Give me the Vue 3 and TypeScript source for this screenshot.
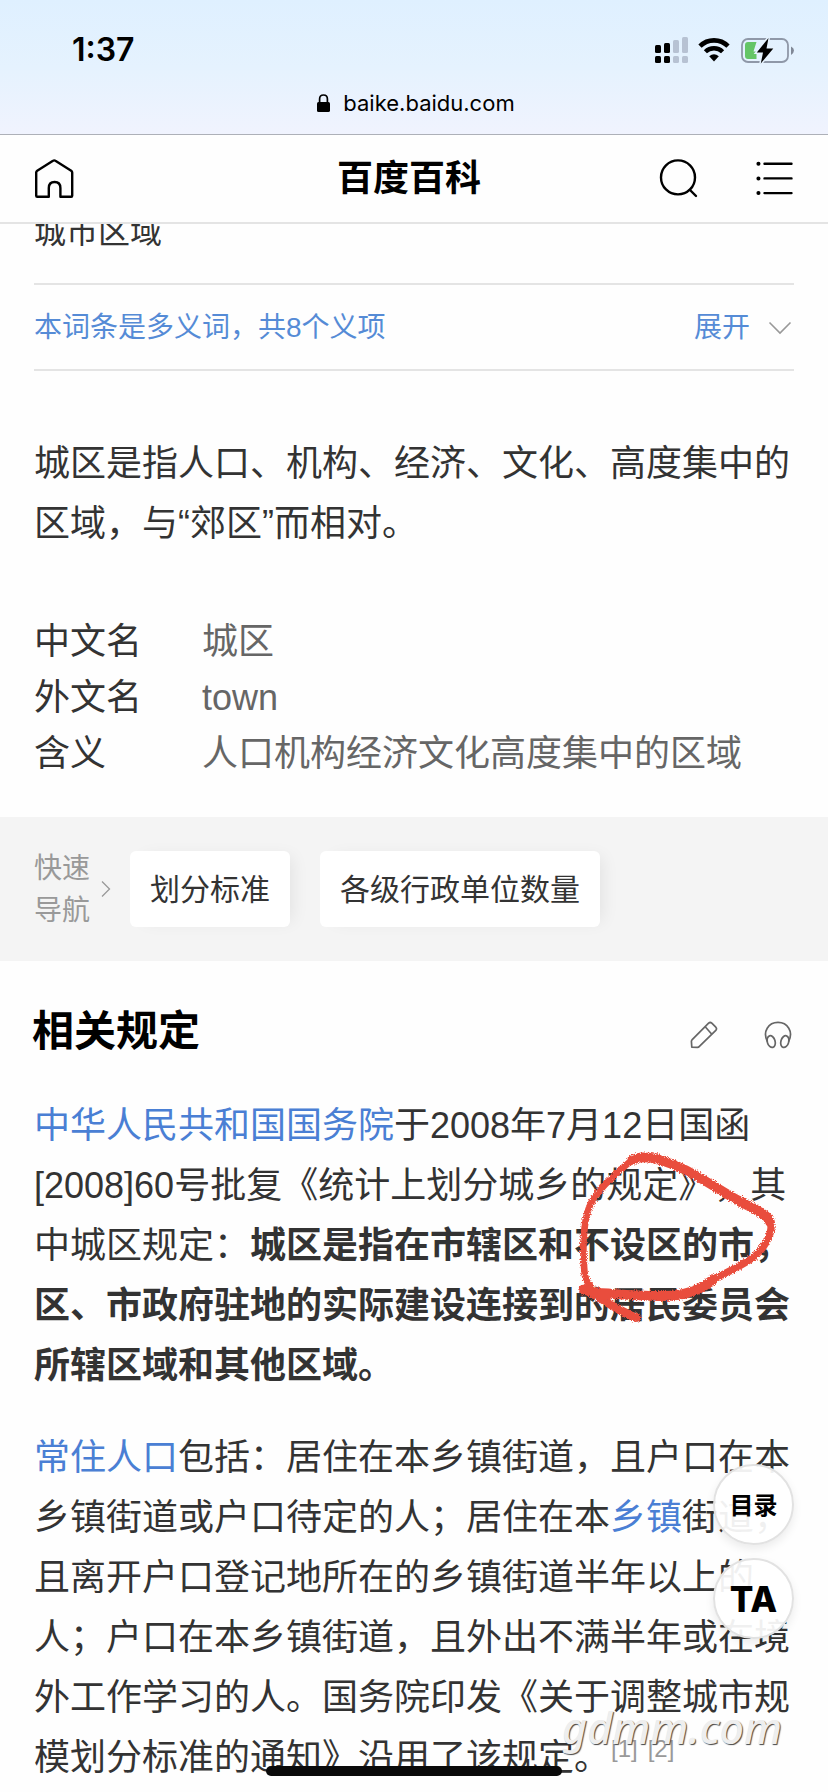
<script setup lang="ts">
interface Fact {
  name: string
  value: string
}

const facts: Fact[] = [
  { name: '中文名', value: '城区' },
  { name: '外文名', value: 'town' },
  { name: '含义', value: '人口机构经济文化高度集中的区域' },
]

const sections: string[] = ['划分标准', '各级行政单位数量']

// Cellular bars: left edge, top, height and whether the bar is lit
const bars: { x: number; y: number; h: number; on: boolean }[] = [
  { x: 0, y: 8, h: 8, on: true },
  { x: 9, y: 6, h: 10, on: true },
  { x: 18, y: 3, h: 13, on: false },
  { x: 27, y: 0, h: 16, on: false },
]
</script>

<template>
  <div class="page">
    <header class="browser">
      <div class="status">
        <span class="time">1:37</span>
        <div class="signals">
          <svg class="cell" width="33" height="27" viewBox="0 0 33 27" aria-hidden="true">
            <g v-for="b in bars" :key="b.x" :class="b.on ? 'on' : 'off'">
              <rect :x="b.x" :y="b.y" width="6" :height="b.h" rx="1.5" />
              <rect :x="b.x" y="19" width="6" height="7" rx="1.5" />
            </g>
          </svg>
          <svg width="32" height="24" viewBox="0 0 32 24" aria-hidden="true">
            <path d="M2 8.2A19.8 19.8 0 0 1 30 8.2" fill="none" stroke="#000" stroke-width="4.6" />
            <path d="M7.4 13.8A12.2 12.2 0 0 1 24.6 13.8" fill="none" stroke="#000" stroke-width="4.4" />
            <path d="M11.2 18.2Q16 14.4 20.8 18.2L16 23.6Z" />
          </svg>
          <svg width="54" height="27" viewBox="0 0 54 27" aria-hidden="true">
            <rect x="2" y="2" width="46" height="23" rx="6" fill="none" stroke="#8f98a8" stroke-width="1.8" />
            <path d="M51 9.5Q54 11 54 13.5T51 18Z" fill="#808896" />
            <path d="M8 5H16.5L13.5 14.5H16.5V22H8Q5 22 5 19V8Q5 5 8 5Z" fill="#64c566" />
            <path d="M28.5 1L16.8 15.4H23L20.8 26.4L33.3 11.6H26.5Z" stroke="#e5f2fe" stroke-width="3" />
            <path d="M28.5 1L16.8 15.4H23L20.8 26.4L33.3 11.6H26.5Z" />
          </svg>
        </div>
      </div>
      <div class="address">
        <svg width="13" height="18" viewBox="0 0 13 18" aria-hidden="true">
          <rect x="0" y="8" width="13" height="10" rx="1.6" />
          <path d="M2.6 9V5Q2.6 1 6.5 1T10.4 5V9" fill="none" stroke="#000" stroke-width="1.7" />
        </svg>
        <span>baike.baidu.com</span>
      </div>
    </header>

    <nav class="topbar">
      <button class="icon-btn" type="button" aria-label="首页">
        <svg width="40" height="40" viewBox="0 0 40 40" fill="none" stroke="#000" stroke-width="2.4" stroke-linejoin="round">
          <path d="M3.2 37.8Q2.2 37.8 2.2 36.8V13.6Q2.2 12.4 3.2 11.7L19 1.8Q20.2 1 21.4 1.8L37.2 11.7Q38.2 12.4 38.2 13.6V36.8Q38.2 37.8 37.2 37.8H26.4V29Q26.4 23 20.6 23T14.8 29V37.8Z" />
        </svg>
      </button>
      <h1 class="brand">百度百科</h1>
      <div class="tools">
        <button class="icon-btn" type="button" aria-label="搜索">
          <svg width="40" height="40" viewBox="0 0 40 40" fill="none" stroke="#000" stroke-width="2.4" stroke-linecap="round">
            <circle cx="20" cy="18.4" r="17" />
            <path d="M32 31L38 37" />
          </svg>
        </button>
        <button class="icon-btn" type="button" aria-label="菜单">
          <svg width="38" height="40" viewBox="0 0 38 40" stroke="#000" stroke-width="2.4" stroke-linecap="round">
            <path d="M8.5 4.8H35.5M8.5 19.4H35.5M8.5 34.1H35.5" />
            <path d="M2.4 4.8H2.5M2.4 19.4H2.5M2.4 34.1H2.5" stroke-width="4" />
          </svg>
        </button>
      </div>
    </nav>

    <main class="article">
      <p class="subtitle">城市区域</p>

      <div class="senses">
        <a href="#senses">本词条是多义词，共8个义项</a>
        <button class="expand" type="button">
          <span>展开</span>
          <svg width="24" height="14" viewBox="0 0 24 14" fill="none" stroke="#999" stroke-width="1.6" aria-hidden="true">
            <path d="M1.5 1.5L12 12L22.5 1.5" />
          </svg>
        </button>
      </div>

      <p class="body summary">城区是指人口、机构、经济、文化、高度集中的区域，与“郊区”而相对。</p>

      <dl class="facts">
        <template v-for="fact in facts" :key="fact.name">
          <dt>{{ fact.name }}</dt>
          <dd>{{ fact.value }}</dd>
        </template>
      </dl>

      <section class="quick">
        <span class="quick-label">快速<br />导航</span>
        <svg class="quick-arrow" width="10" height="18" viewBox="0 0 10 18" fill="none" stroke="#999" stroke-width="1.3" aria-hidden="true">
          <path d="M1 1.5L8.5 9L1 16.5" />
        </svg>
        <button v-for="s in sections" :key="s" class="chip" type="button">{{ s }}</button>
      </section>

      <div class="section-head">
        <h2>相关规定</h2>
        <div class="section-tools">
          <button class="icon-btn" type="button" aria-label="编辑">
            <svg width="28" height="28" viewBox="0 0 28 28" fill="none" stroke="#666" stroke-width="1.7" stroke-linejoin="round">
              <path d="M1.8 26.2L1.4 20.4Q1.4 19.4 2.2 18.6L18.6 2.2Q20.2 .8 21.8 2.2L25.8 6.2Q27.2 7.8 25.8 9.4L9.4 25.4Q8.6 26.4 7.4 26.4Z" />
              <path d="M15.2 5.8L21.6 13" />
            </svg>
          </button>
          <button class="icon-btn" type="button" aria-label="播放">
            <svg width="28" height="28" viewBox="0 0 28 28" fill="none" stroke="#666" stroke-width="1.7">
              <path d="M3.4 20.5C-1.8 10.5 4.6 1.4 14 1.4S29.8 10.5 24.6 20.5" />
              <ellipse cx="7.2" cy="20.6" rx="3.9" ry="6" transform="rotate(-16 7.2 20.6)" />
              <ellipse cx="20.8" cy="20.6" rx="3.9" ry="6" transform="rotate(16 20.8 20.6)" />
            </svg>
          </button>
        </div>
      </div>

      <div class="regulation">
        <p class="body">
          <a href="#council">中华人民共和国国务院</a>于2008年7月12日国函[2008]60号批复《统计上划分城乡的规定》，其中城区规定：<b>城区是指在市辖区和不设区的市，区、市政府驻地的实际建设连接到的居民委员会所辖区域和其他区域。</b>
        </p>
        <svg class="marker" width="230" height="200" viewBox="0 0 690 600" fill="none" stroke="#e94e3d" stroke-linecap="round" stroke-linejoin="round" aria-hidden="true">
          <filter id="crayon" x="-5%" y="-5%" width="110%" height="110%">
            <feTurbulence type="fractalNoise" baseFrequency="0.35" numOctaves="2" seed="4" />
            <feDisplacementMap in="SourceGraphic" scale="14" xChannelSelector="R" yChannelSelector="G" />
          </filter>
          <g filter="url(#crayon)">
            <path stroke-width="20" d="M92 435C68 415 74 380 70 335C70 280 75 230 88 198C98 165 160 100 215 58" />
            <path stroke-width="29" d="M215 58C250 36 320 60 370 84C430 112 500 163 560 192C595 211 625 223 630 243" />
            <path stroke-width="22" d="M630 243C642 270 615 320 585 345C550 372 500 395 460 415" />
            <path stroke-width="30" d="M460 415C420 450 370 465 310 465C240 466 180 460 120 456L70 446" />
            <path stroke-width="26" d="M74 444C120 465 160 505 230 530" />
          </g>
        </svg>
      </div>

      <p class="body residents">
        <a href="#residents">常住人口</a>包括：居住在本乡镇街道，且户口在本乡镇街道或户口待定的人；居住在本<a href="#township">乡镇</a>街道，且离开户口登记地所在的乡镇街道半年以上的人；户口在本乡镇街道，且外出不满半年或在境外工作学习的人。国务院印发《关于调整城市规模划分标准的通知》沿用了该规定。<sup><a href="#ref-1">[1]</a><a href="#ref-2">[2]</a></sup>
      </p>
    </main>

    <aside class="floating">
      <button class="round" type="button">目录</button>
      <button class="round logo" type="button">TA</button>
    </aside>
    <span class="watermark">gdmm.com</span>
    <div class="home-indicator"></div>
  </div>
</template>

<style>
body {
  background: #fff;
}
</style>

<style scoped>
.page {
  position: relative;
  min-height: 100vh;
  overflow: hidden;
  background: #fefefe;
  color: #333;
  font-family: "Liberation Sans", "Noto Sans CJK SC", sans-serif;
  text-spacing-trim: space-all;
}

h1, h2, p, dl, dd {
  margin: 0;
}

a {
  color: #4a7fd4;
  text-decoration: none;
}

button {
  margin: 0;
  padding: 0;
  border: 0;
  background: none;
  color: inherit;
  font-family: inherit;
}

svg {
  display: block;
}

.browser {
  display: flex;
  flex-direction: column;
  height: 134px;
  border-bottom: 1px solid #adb0b8;
  background: linear-gradient(#dff0ff, #e5f2fe 50%, #f0f3fe);
  color: #000;
  font-family: Inter, "Liberation Sans", sans-serif;
}

.status {
  display: flex;
  align-items: center;
  justify-content: space-between;
  height: 86px;
  padding: 14px 34px 0 72px;
  box-sizing: border-box;
}

.time {
  font-size: 32px;
  font-weight: 600;
  line-height: 40px;
}

.signals {
  display: flex;
  align-items: center;
  gap: 10px;
}

.on {
  fill: #000;
}

.off {
  fill: #b7c2d3;
}

.address {
  display: flex;
  align-items: center;
  justify-content: center;
  gap: 13px;
  padding: 1px 0 0 4px;
  font-size: 22px;
  line-height: 32px;
}

.topbar {
  display: grid;
  grid-template-columns: 1fr auto 1fr;
  align-items: center;
  height: 87px;
  padding: 0 34px;
  border-bottom: 2px solid #e4e4e4;
}

.brand {
  padding-right: 10px;
  color: #000;
  font-size: 36px;
  font-weight: 700;
  line-height: 48px;
}

.tools {
  display: flex;
  justify-content: flex-end;
  gap: 58px;
}

.icon-btn {
  justify-self: start;
}

.article {
  overflow: hidden;
}

.subtitle {
  margin: -14px 34px 0;
  padding-bottom: 29px;
  border-bottom: 2px solid #e4e4e4;
  font-size: 32px;
  line-height: 44px;
}

.senses {
  display: flex;
  align-items: center;
  justify-content: space-between;
  height: 86px;
  margin: 0 34px;
  padding-top: 2px;
  border-bottom: 2px solid #e4e4e4;
  box-sizing: border-box;
  font-size: 28px;
  line-height: 40px;
}

.senses a,
.expand {
  color: #558bd6;
}

.expand {
  display: flex;
  align-items: center;
  gap: 18px;
  padding-right: 2px;
  font-size: 28px;
  line-height: 40px;
}

.body {
  font-size: 36px;
  line-height: 60px;
}

.summary {
  margin: 63px 34px 0;
}

.facts {
  display: grid;
  grid-template-columns: 168px 1fr;
  margin: 60px 34px 35px;
  font-size: 36px;
  line-height: 56px;
}

.facts dd {
  color: #666;
}

.quick {
  display: flex;
  align-items: center;
  height: 144px;
  padding: 0 34px;
  background: #f4f4f4;
}

.quick-label {
  padding-top: 2px;
  color: #999;
  font-size: 28px;
  line-height: 42px;
}

.quick-arrow {
  margin: 0 19px 0 11px;
}

.chip {
  height: 76px;
  margin-right: 30px;
  padding: 0 20px 4px;
  border-radius: 6px;
  background: #fff;
  box-shadow: 8px 0 16px -6px rgba(0, 0, 0, 0.08);
  font-size: 30px;
  white-space: nowrap;
}

.section-head {
  display: flex;
  align-items: center;
  justify-content: space-between;
  padding: 41px 36px 34px 32px;
}

.section-head h2 {
  color: #000;
  font-size: 42px;
  font-weight: 700;
  line-height: 60px;
}

.section-tools {
  display: flex;
  gap: 46px;
  padding-top: 6px;
}

.regulation {
  position: relative;
  margin: 0 34px 32px;
}

.marker {
  position: absolute;
  top: 45px;
  left: 526px;
  pointer-events: none;
}

.residents {
  margin: 0 34px 4px;
}

sup {
  padding-left: 1px;
  font-size: 24px;
  line-height: 0;
}

sup a {
  margin-right: 10px;
  color: #999;
}

.floating {
  position: absolute;
  right: 34px;
  bottom: 153px;
  display: flex;
  flex-direction: column;
  gap: 13px;
}

.round {
  width: 81px;
  height: 81px;
  padding-bottom: 2px;
  border: 2px solid #e2e2e2;
  border-radius: 50%;
  background: rgba(255, 255, 255, 0.93);
  box-shadow: 0 4px 10px rgba(0, 0, 0, 0.08);
  color: #000;
  font-size: 24px;
  font-weight: 700;
}

.logo {
  padding-bottom: 0;
  font-family: Inter, sans-serif;
  font-size: 35px;
  font-weight: 800;
}

.watermark {
  position: absolute;
  right: 46px;
  bottom: 40px;
  color: #eee;
  font-family: "Noto Sans", "Open Sans", sans-serif;
  font-size: 43px;
  font-style: italic;
  font-weight: 500;
  line-height: 48px;
  text-shadow: 1px 1px 1px #444;
}

.home-indicator {
  position: absolute;
  bottom: 16px;
  left: 50%;
  width: 296px;
  height: 10px;
  margin-left: -148px;
  border-radius: 5px;
  background: #0a0a0a;
}
</style>
